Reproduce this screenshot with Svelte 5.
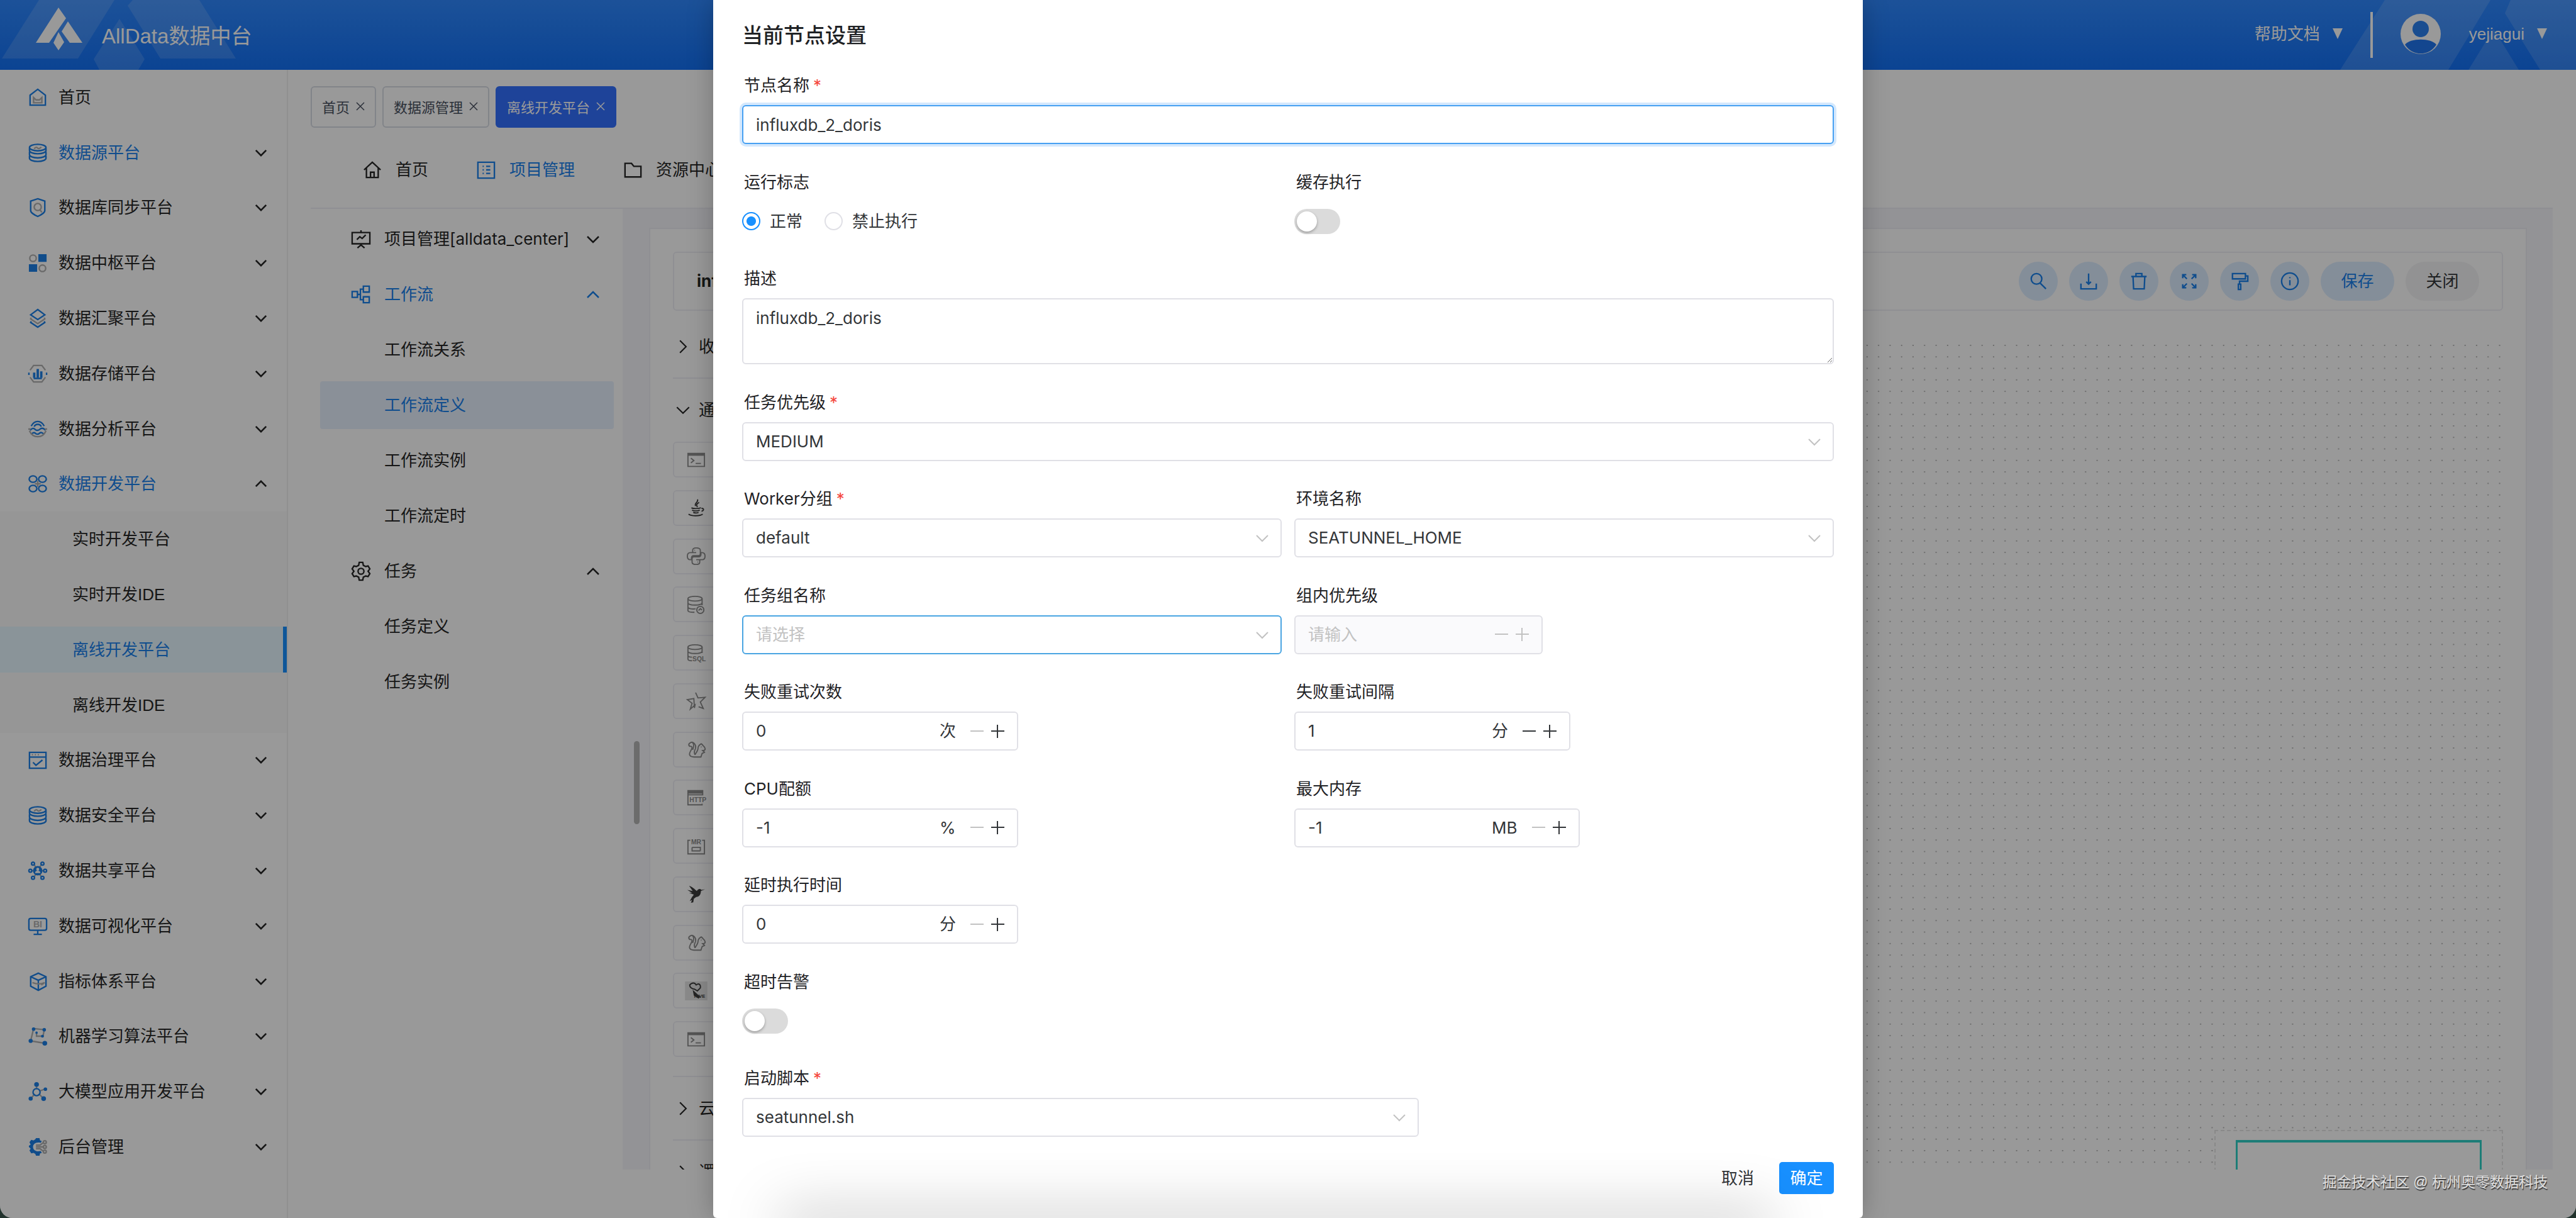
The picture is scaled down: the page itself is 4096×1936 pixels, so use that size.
<script lang="ts">
    // Two-tone icons of the platform menu, drawn on a 32 x 32 grid
    const icons: Record<string, string> = {
        home: '<path d="M3 12 16 2l13 10v17H3z"/><path class="soft" d="M9 16v9h14v-9l-4 4h-6z"/>',
        database:
            '<ellipse cx="16" cy="7" rx="14" ry="5.5"/><path d="M2 8v4c0 3 6 5.5 14 5.5S30 15 30 12V8M2 14v5c0 3 6 5.5 14 5.5S30 22 30 19v-5M2 21v4c0 3 6 5.5 14 5.5S30 28 30 25v-4"/><path class="soft" d="M10 9c3-4 5-2 6-1s4 1 6-2"/>',
        shield: '<path d="m16 1 12 4v16c0 4-6 7-12 10C10 28 4 25 4 21V5z"/><circle class="soft" cx="16" cy="15" r="6"/><path class="soft" d="m20 20 3 4"/>',
        blocks: '<path class="solid" d="M17 1h14v13H17zM1 18h14v13H1z"/><circle class="soft" cx="8" cy="8" r="5.5"/><circle class="soft" cx="24" cy="25" r="5.5"/>',
        layers: '<path d="m16 1 12 9-12 8-12-8z"/><path d="m5 21-1 2 12 8 12-8-1-2"/><path class="soft" d="m5 15-1 2 12 8 12-8-1-2"/>',
        storage: '<path class="soft" d="M3 10 9 2h14l6 8M3 22l6 8h14l6-8"/><path class="solid" d="M8 14h4v9H8zM14 8h4v15h-4zM20 12h4v11h-4z"/><path d="M1 14v4M31 14v4M9 24h14"/>',
        analysis:
            '<path d="M5 11C8 5 12 3 16 3s8 2 11 8M10 12c1-3 3-4 6-4s5 1 6 4M3 18c4-4 6-4 9-1 3 2 5 2 8-1 3-2 6-2 9 2M6 24c3-3 5-2 7 0 2 1 4 1 6-1 3-2 4-1 7 1"/><path class="soft" d="M0 16h4M28 16h4M2 19c3 7 8 10 14 10s11-3 14-10"/>',
        clover: '<ellipse cx="8" cy="8" rx="6.5" ry="5.5"/><ellipse cx="24" cy="8" rx="6.5" ry="5.5"/><ellipse cx="8" cy="24" rx="6.5" ry="5.5"/><ellipse cx="24" cy="24" rx="6.5" ry="5.5"/><path class="soft" d="M16 11v10M11 16h10"/>',
        govern: '<path d="M2 3h28v27H2zM2 11h28M8 20l5 5 11-9"/><path class="soft" d="M6 7h2M11 7h2M16 7h2"/>',
        share: '<path class="soft" d="m10 6 4 6M22 6l-4 6M5 16h5M22 16h5M10 26l4-6M22 26l-4-6"/><circle class="solid" cx="16" cy="16" r="8"/><circle class="hole" cx="16" cy="13.5" r="2.5"/><path class="hole" d="M11.500 20c0-3 2-4 4.500-4s4.500 1 4.500 4z"/><circle cx="8" cy="4" r="2.500"/><circle cx="24" cy="4" r="2.500"/><circle cx="3.500" cy="16" r="2.500"/><circle cx="28.500" cy="16" r="2.500"/><circle cx="8" cy="28" r="2.500"/><circle cx="24" cy="28" r="2.500"/>',
        bi: '<rect x="1" y="3" width="30" height="20" rx="3"/><path d="M16 23v6M9 30h14"/><text class="tag soft-text" x="16" y="18" text-anchor="middle" font-size="15">BI</text>',
        cube: '<path d="m17 2 13 6v16l-13 7-13-7V8zM4 8l13 6 13-6M17 14v17"/><path class="soft" d="M7 18c8 3 14 3 21 0M22 22l6-4"/>',
        learning:
            '<path class="soft" d="M9 3 4 24l24 4M9 3l18 2-2 11H14v-6"/><circle class="solid" cx="9" cy="4" r="3"/><circle class="solid" cx="27" cy="5" r="3"/><circle class="solid" cx="4" cy="24" r="3.500"/><circle class="solid" cx="28" cy="28" r="4"/><circle class="solid" cx="24" cy="16" r="2.500"/><circle class="solid" cx="14" cy="10" r="2"/>',
        model: '<path class="soft" d="M14 4v8M19 15l9-3M11 20l-6 7M18 20l7 7"/><circle cx="14" cy="17" r="6"/><circle class="solid" cx="14" cy="4" r="4"/><circle class="solid" cx="29" cy="12" r="3"/><circle class="solid" cx="4" cy="28" r="3.500"/><circle class="solid" cx="26" cy="28" r="4"/>',
        admin: '<path class="solid" d="m13 1 6 0 1 4 3 1-2 3c-8-2-13 2-13 7s5 9 13 7l2 3-3 1-1 4h-6l-1-3-3-2-4 1-3-5 2-3-3-3v-2l3-2-2-4 3-4 4 1 3-2z"/><path class="soft" d="M13 13h7l5-4M13 16h12M13 19h7l5 4"/><circle class="soft" cx="28" cy="8" r="2.500"/><circle class="soft" cx="28" cy="16" r="2.500"/><circle class="soft" cx="28" cy="24" r="2.500"/>',

        // Project navigation
        house: '<path d="M2 16 16 3l14 13M6 13v16h20V13M13 29v-9h6v9"/>',
        list: '<path d="M2 3h28v27H2zM10 10h2M16 10h7M10 16h2M16 16h7M10 22h2M16 22h7"/>',
        folder: '<path d="M3 5h11l4 5h12v18H3z"/>',
        board: '<path d="M1 5h30v19H1zM16 1v4M16 24v2M10 31l6-5 6 5M9 17l5-5 4 3 6-6"/>',
        flow: '<path d="M1 11h9v10H1zM20 2h10v10H20zM20 20h10v10H20zM10 16h5M20 7h-5v18h5"/>',
        gear: '<circle cx="16" cy="16" r="5"/><path d="M13 1h6l1 5 4 2 4-1 3 5-3 4 3 4-3 5-4-1-4 2-1 5h-6l-1-5-4-2-4 1-3-5 3-4-3-4 3-5 4 1 4-2z"/>',

        // Task types
        shell: '<path d="M2 5h28v22H2z"/><path class="solid" d="M2 5h28v4H2z"/><path d="m7 13 5 4-5 4M15 22h9"/>',
        java: '<path d="M18 2c3 4-6 6-3 11M21 7c-5 3-5 4-3 8M8 16c2 2 12 2 16 0M9 20c3 2 10 2 13 0M11 24c3 1 7 1 9 0M25 17c5 0 4 4 0 5M3 27c6 4 20 3 24 0"/>',
        python: '<path d="M16 10h-6V6c0-3 2-4 6-4s7 1 7 4v6c0 2-1 3-3 3h-8c-3 0-4 2-4 4v3H6c-3 0-5-2-5-6s2-6 5-6h10M16 22h6v4c0 3-2 4-6 4s-7-1-7-4v-6c0-2 1-3 3-3h8c3 0 4-2 4-4v-3h2c3 0 5 2 5 6s-2 6-5 6H16M13 6h1M18 26h1"/>',
        procedure:
            '<ellipse cx="14" cy="6" rx="12" ry="4"/><path d="M2 6v20c0 2 5 3 11 3M26 6v11M2 13c0 5 24 5 24 0M2 20c0 3 8 4 13 3"/><circle cx="23" cy="25" r="6"/><path d="m20 26 3-3 3 2"/>',
        sql: '<ellipse cx="14" cy="6" rx="12" ry="4"/><path d="M2 6v20c0 2 3 3 7 3M26 6v10M2 13c0 5 24 5 24 0M2 20c0 2 3 3 7 3"/><text class="tag" x="21" y="30" text-anchor="middle" font-size="11">SQL</text>',
        spark: '<path d="m15 2 4 9 12-1-8 8 5 11-8-3M13 28l1-5-8 7 3-10-8-6 11-2z"/>',
        flink: '<path d="M14 25c-3-5 0-7 1-11 1-7-5-12-9-9-4 2-3 6 1 6 3 0 2 4 0 7-5 8-1 11 5 11h12l2-6 4-2-3-3c6 0 5-5 1-8-2-2-3-4-4-3-4 2-5 4-5 8 0 3-2 5-5 10M10 5c3 3 2 7 0 12M24 12h1"/>',
        http: '<path d="M27 12V4H2v24h24v-2M2 11h25"/><path class="solid" d="M2 4h25v5H2z"/><text class="tag" x="19" y="23" text-anchor="middle" font-size="11">HTTP</text>',
        mr: '<path d="M6 6H2v23h28V6h-4M9 18h14v6M9 18v6h14"/><text class="tag" x="16" y="13" text-anchor="middle" font-size="11">MR</text>',
        bird: '<path class="solid" d="M4 2c4 1 9 5 13 9 3-5 6-4 8-2l6-1-7 3c0 6-3 10-8 10l-4 3-1 6-4 1 2-5-4 2 4-7 3-4-8-3 5 0-8-5 9 2z"/>',
        hive: '<path class="shade" d="M-3 0h38v32H-3z"/><path d="M5 6c4-5 9-4 11 0 5-4 8 0 7 5l-5 5-5-3c-4 0-8-3-8-7z"/><path class="solid" d="m10 14 13 12-3 3-8-5z"/><text class="tag" x="22" y="28" text-anchor="middle" font-size="8">HIVE</text>',

        // Canvas toolbar
        search: '<circle cx="13" cy="12" r="9"/><path d="m19 19 10 10"/>',
        download: '<path d="M16 3v17M12 17l4 4 4-4M3 20v9h26v-9"/>',
        trash: '<path d="M3 8h26M11 8V3h10v5M6 8l1 21h18l1-21"/>',
        expand: '<path d="M5 11V5h6M5 5l7 7M21 5h6v6M27 5l-7 7M5 21v6h6M5 27l7-7M27 21v6h-6M27 27l-7-7"/>',
        paint: '<path d="M4 3h22v9H4zM26 7h4v9H16v5M14 21h4v9h-4z"/>',
        info: '<circle cx="16" cy="16" r="14"/><path d="M16 14v9M16 9v2"/>',
    };

    type MenuItem = { label: string; icon: string; blue?: boolean; leaf?: boolean; children?: string[] };

    const platforms: MenuItem[] = [
        { label: "首页", icon: "home", leaf: true },
        { label: "数据源平台", icon: "database", blue: true },
        { label: "数据库同步平台", icon: "shield" },
        { label: "数据中枢平台", icon: "blocks" },
        { label: "数据汇聚平台", icon: "layers" },
        { label: "数据存储平台", icon: "storage" },
        { label: "数据分析平台", icon: "analysis" },
        {
            label: "数据开发平台",
            icon: "clover",
            blue: true,
            children: ["实时开发平台", "实时开发IDE", "离线开发平台", "离线开发IDE"],
        },
        { label: "数据治理平台", icon: "govern" },
        { label: "数据安全平台", icon: "database" },
        { label: "数据共享平台", icon: "share" },
        { label: "数据可视化平台", icon: "bi" },
        { label: "指标体系平台", icon: "cube" },
        { label: "机器学习算法平台", icon: "learning" },
        { label: "大模型应用开发平台", icon: "model" },
        { label: "后台管理", icon: "admin" },
    ];

    const tabs = ["首页", "数据源管理", "离线开发平台"];

    const navs = [
        { label: "首页", icon: "house" },
        { label: "项目管理", icon: "list" },
        { label: "资源中心", icon: "folder" },
    ];

    const projectMenu = [
        { label: "项目管理[alldata_center]", icon: "board", arrow: "down" },
        { label: "工作流", icon: "flow", arrow: "up", blue: true },
        { label: "工作流关系" },
        { label: "工作流定义", active: true },
        { label: "工作流实例" },
        { label: "工作流定时" },
        { label: "任务", icon: "gear", arrow: "up" },
        { label: "任务定义" },
        { label: "任务实例" },
    ];

    const taskTypes = [
        "shell", "java", "python", "procedure", "sql", "spark", "flink",
        "http", "mr", "bird", "flink", "hive", "shell",
    ];

    const tools = ["search", "download", "trash", "expand", "paint", "info"];

    let activeTab = $state("离线开发平台");
    let activeChild = $state("离线开发平台");
    let activeNav = $state("项目管理");

    let name = $state("influxdb_2_doris");
    let description = $state("influxdb_2_doris");
    let flag = $state("YES");
    let cache = $state(false);
    let timeoutAlert = $state(false);

    let numbers = $state({ retryTimes: 0, retryInterval: 1, cpu: -1, memory: -1, delay: 0 });
    const minimums = { retryTimes: 0, retryInterval: 0, cpu: -1, memory: -1, delay: 0 };

    type NumberKey = keyof typeof minimums;

    function step(key: NumberKey, by: number) {
        numbers[key] = Math.max(minimums[key], numbers[key] + by);
    }
</script>

{#snippet icon(kind: string)}
    <svg class="icon" viewBox="0 0 32 32" aria-hidden="true">{@html icons[kind]}</svg>
{/snippet}

{#snippet chevron(dir: string)}
    <svg class="chevron {dir}" viewBox="0 0 22 13" aria-hidden="true"><path d="m2 2 9 9 9-9" /></svg>
{/snippet}

{#snippet selectField(id: string, label: string, options: string[], required = false, extra = "")}
    <div class="field {extra}">
        <label for={id}>{label}{#if required}<span class="star">*</span>{/if}</label>
        <div class="select">
            <select {id}>
                {#each options as option}
                    <option>{option}</option>
                {/each}
            </select>
            {@render chevron("down")}
        </div>
    </div>
{/snippet}

{#snippet numberField(key: NumberKey, label: string, unit: string)}
    <div class="field">
        <label for={key}>{label}</label>
        <div class="number">
            <input id={key} type="text" inputmode="numeric" bind:value={numbers[key]} />
            <span class="unit">{unit}</span>
            <button type="button" aria-label="减少" disabled={numbers[key] <= minimums[key]} onclick={() => step(key, -1)}>
                <svg viewBox="0 0 21 21"><path d="M0 10h21" /></svg>
            </button>
            <button type="button" aria-label="增加" onclick={() => step(key, 1)}>
                <svg viewBox="0 0 21 21"><path d="M0 10h21M10 0v21" /></svg>
            </button>
        </div>
    </div>
{/snippet}

<div class="window">
    <header>
        <svg class="pattern" viewBox="0 0 375 111" aria-hidden="true">
            <path d="M62 0h120l-58 93H3zM211 0h106l58 93H255L203 9zM190 30l40 64-10 17h-62l-9-17z" />
        </svg>
        <svg class="pattern right" viewBox="0 0 375 111" aria-hidden="true">
            <path d="M71 0h168l-67 111H0zM271 0h104v111h-57L262 21zM244 46l40 65h-80z" />
        </svg>
        <svg class="logo" viewBox="0 0 74 68" aria-hidden="true">
            <path d="m36 0 12 17-27 39H0zM51 22l23 34H54L41 38zM36 39l9 16-9 13-8-12z" />
        </svg>
        <span class="brand">AllData数据中台</span>
        <button class="menu-button">帮助文档 <i class="caret"></i></button>
        <span class="bar"></span>
        <svg class="avatar" viewBox="0 0 64 64" aria-hidden="true">
            <circle cx="32" cy="32" r="32" fill="#fff" />
            <circle cx="32" cy="24" r="13" fill="#2b80f0" />
            <path d="M7 49c8-11 42-11 50 0-12 19-38 19-50 0z" fill="#2176ef" />
        </svg>
        <button class="menu-button user">yejiagui <i class="caret"></i></button>
    </header>

    <div class="body">
        <aside>
            <ul class="platforms">
                {#each platforms as item}
                    <li>
                        <a href="#top" class:blue={item.blue}>
                            <span class="duo">{@render icon(item.icon)}</span>
                            {item.label}
                            {#if !item.leaf}{@render chevron(item.children ? "up" : "down")}{/if}
                        </a>
                    </li>
                    {#if item.children}
                        <li class="group">
                            {#each item.children as child}
                                <div class="slot">
                                    <a href="#top" class:active={child === activeChild} onclick={() => (activeChild = child)}>{child}</a>
                                </div>
                            {/each}
                        </li>
                    {/if}
                {/each}
            </ul>
        </aside>

        <div class="content">
            <div class="tabs">
                {#each tabs as tab}
                    <button class:active={tab === activeTab} onclick={() => (activeTab = tab)}>
                        {tab}
                        <svg viewBox="0 0 14 14" aria-hidden="true"><path d="m1 1 12 12M13 1 1 13" /></svg>
                    </button>
                {/each}
            </div>

            <nav>
                {#each navs as nav}
                    <a href="#top" class:blue={nav.label === activeNav} onclick={() => (activeNav = nav.label)}>
                        {@render icon(nav.icon)}{nav.label}
                    </a>
                {/each}
            </nav>

            <div class="workspace">
                <ul class="project-menu">
                    {#each projectMenu as item}
                        <li>
                            <a href="#top" class:blue={item.blue || item.active} class:active={item.active} class:leaf={!item.icon}>
                                {#if item.icon}{@render icon(item.icon)}{/if}
                                {item.label}
                                {#if item.arrow}{@render chevron(item.arrow)}{/if}
                            </a>
                        </li>
                    {/each}
                </ul>

                <main>
                    <span class="scrollbar"></span>
                    <section class="card">
                        <div class="toolbar">
                            <h3>influxdb_2_doris</h3>
                            {#each tools as tool}
                                <button class="round" aria-label={tool}>{@render icon(tool)}</button>
                            {/each}
                            <button class="pill">保存</button>
                            <button class="pill plain">关闭</button>
                        </div>
                        <div class="dag">
                            <div class="palette">
                                <div class="fold">{@render chevron("next")}收藏</div>
                                <div class="fold">{@render chevron("down")}通用</div>
                                <ul>
                                    {#each taskTypes as type}
                                        <li class={type}>{@render icon(type)}</li>
                                    {/each}
                                </ul>
                                <div class="fold">{@render chevron("next")}云</div>
                                <div class="fold">{@render chevron("next")}逻辑</div>
                            </div>
                            <div class="canvas">
                                <svg class="dots" aria-hidden="true">
                                    <defs>
                                        <pattern id="dots" width="20" height="20" patternUnits="userSpaceOnUse" patternTransform="scale(0.9143)">
                                            <rect x="2" y="0" width="2" height="2" fill="#aaa" />
                                        </pattern>
                                    </defs>
                                    <rect width="100%" height="100%" fill="url(#dots)" />
                                </svg>
                                <div class="minimap"><span></span></div>
                            </div>
                        </div>
                    </section>
                </main>
            </div>
        </div>
    </div>

    <div class="mask">
        <form class="modal" onsubmit={(e) => e.preventDefault()}>
            <h2>当前节点设置</h2>

            <div class="fields">
                <div class="field">
                    <label for="name">节点名称<span class="star">*</span></label>
                    <input id="name" class="text focused" bind:value={name} />
                </div>

                <div class="pair">
                    <div class="field">
                        <div class="label" id="flag-label">运行标志</div>
                        <div class="line" role="radiogroup" aria-labelledby="flag-label">
                            <label class="radio"><input type="radio" value="YES" bind:group={flag} />正常</label>
                            <label class="radio"><input type="radio" value="NO" bind:group={flag} />禁止执行</label>
                        </div>
                    </div>
                    <div class="field">
                        <label for="cache">缓存执行</label>
                        <div class="line"><input id="cache" class="switch" type="checkbox" bind:checked={cache} /></div>
                    </div>
                </div>

                <div class="field">
                    <label for="description">描述</label>
                    <textarea id="description" bind:value={description}></textarea>
                </div>

                {@render selectField("priority", "任务优先级", ["MEDIUM"], true)}

                <div class="pair">
                    {@render selectField("worker", "Worker分组", ["default"], true)}
                    {@render selectField("environment", "环境名称", ["SEATUNNEL_HOME"])}
                </div>

                <div class="pair">
                    {@render selectField("group", "任务组名称", ["请选择"], false, "empty")}
                    <div class="field">
                        <label for="group-priority">组内优先级</label>
                        <div class="number disabled">
                            <input id="group-priority" type="text" placeholder="请输入" disabled />
                            <button type="button" aria-label="减少" disabled>
                                <svg viewBox="0 0 21 21"><path d="M0 10h21" /></svg>
                            </button>
                            <button type="button" aria-label="增加" disabled>
                                <svg viewBox="0 0 21 21"><path d="M0 10h21M10 0v21" /></svg>
                            </button>
                        </div>
                    </div>
                </div>

                <div class="pair">
                    {@render numberField("retryTimes", "失败重试次数", "次")}
                    {@render numberField("retryInterval", "失败重试间隔", "分")}
                </div>

                <div class="pair">
                    {@render numberField("cpu", "CPU配额", "%")}
                    {@render numberField("memory", "最大内存", "MB")}
                </div>

                <div class="pair">
                    {@render numberField("delay", "延时执行时间", "分")}
                </div>

                <div class="field">
                    <label for="timeout">超时告警</label>
                    <div class="line"><input id="timeout" class="switch" type="checkbox" bind:checked={timeoutAlert} /></div>
                </div>

                {@render selectField("script", "启动脚本", ["seatunnel.sh"], true, "partial")}
            </div>

            <footer>
                <button type="button" class="cancel">取消</button>
                <button type="submit" class="confirm">确定</button>
            </footer>
        </form>
        <span class="dock-shadow"></span>
        <span class="watermark">掘金技术社区 @ 杭州奥零数据科技</span>
    </div>
</div>

<style>
    :global(body) {
        background: #22332d;
    }

    .window,
    .window :global(*) {
        box-sizing: border-box;
    }

    .window {
        position: relative;
        display: flex;
        flex-direction: column;
        height: 100vh;
        overflow: hidden;
        border-radius: 0 0 20px 20px;
        background: #fff;
        color: #262626;
        font-family: "Liberation Sans", "Noto Sans CJK SC", sans-serif;
        font-size: 26px;
        line-height: 32px;
    }

    a {
        color: inherit;
        text-decoration: none;
    }

    button {
        padding: 0;
        border: 0;
        background: none;
        color: inherit;
        font: inherit;
    }

    ul {
        margin: 0;
        padding: 0;
        list-style: none;
    }

    .blue {
        color: #1a80ec;
    }

    .icon {
        flex: none;
        width: 30px;
        height: 30px;
        overflow: visible;
        fill: none;
        stroke: currentColor;
        stroke-width: 2.5;
    }

    .icon :global(.solid) {
        fill: currentColor;
        stroke: none;
    }

    .icon :global(.hole) {
        fill: #fff;
        stroke: none;
    }

    .icon :global(.soft) {
        stroke: #b0b0b0;
    }

    .icon :global(.shade) {
        fill: #e4e4e4;
        stroke: none;
    }

    .icon :global(.tag) {
        fill: currentColor;
        stroke: none;
        font-weight: bold;
    }

    .icon :global(.soft-text) {
        fill: #b0b0b0;
    }

    .chevron {
        flex: none;
        width: 22px;
        height: 13px;
        fill: none;
        stroke: currentColor;
        stroke-width: 2;
    }

    .chevron.up {
        transform: rotate(180deg);
    }

    .chevron.next {
        transform: rotate(-90deg);
    }

    /* Header */

    header {
        position: relative;
        display: flex;
        flex: none;
        align-items: center;
        height: 111px;
        padding: 0 46px 0 57px;
        background: linear-gradient(#2f88ff, #1371f5);
        color: #fff;
    }

    .pattern {
        position: absolute;
        top: 0;
        left: 0;
        height: 111px;
        fill: rgba(255, 255, 255, 0.14);
    }

    .pattern.right {
        right: 0;
        left: auto;
    }

    .logo {
        position: relative;
        width: 74px;
        height: 68px;
        margin-bottom: 20px;
        fill: #fff;
    }

    .brand {
        position: relative;
        flex: 1;
        margin-left: 31px;
        padding-top: 4px;
        font-size: 33px;
        line-height: 40px;
    }

    .menu-button {
        position: relative;
        display: flex;
        gap: 20px;
        align-items: center;
        padding-bottom: 4px;
    }

    .caret {
        border: solid transparent;
        border-width: 17px 8px 0;
        border-top-color: #fff;
    }

    .bar {
        position: relative;
        width: 4px;
        height: 73px;
        margin: 0 44px;
        background: #fff;
    }

    .avatar {
        position: relative;
        width: 64px;
        height: 64px;
        margin: 0 45px 4px 0;
    }

    .body {
        display: flex;
        flex: 1;
        min-height: 0;
    }

    /* Platform menu */

    aside {
        flex: none;
        width: 458px;
        padding-bottom: 69px;
        border-right: 2px solid #f0f0f0;
    }

    .platforms {
        display: flex;
        flex-direction: column;
        height: 100%;
    }

    .platforms li {
        display: flex;
        flex: 1 1 0;
        flex-direction: column;
        justify-content: center;
    }

    .platforms .group {
        flex-grow: 4;
        background: #fafafa;
    }

    .platforms a {
        display: flex;
        align-items: center;
        height: 73px;
        padding: 0 31px 0 45px;
    }

    .duo {
        display: flex;
        margin-right: 18px;
        color: #1c7fe6;
    }

    .platforms .chevron {
        width: 20px;
        height: 12px;
        margin-left: auto;
        color: #262626;
        stroke-width: 3;
    }

    .slot {
        display: flex;
        flex: 1;
        flex-direction: column;
        justify-content: center;
    }

    .slot a {
        padding-left: 115px;
    }

    .slot .active {
        border-right: 6px solid #1890ff;
        background: #e6f7ff;
        color: #1a80ec;
    }

    /* Tabs and navigation */

    .content {
        display: flex;
        flex: 1;
        flex-direction: column;
        min-width: 0;
        padding: 26px 37px 77px 36px;
    }

    .tabs {
        display: flex;
        gap: 10px;
    }

    .tabs button {
        display: flex;
        gap: 10px;
        align-items: center;
        height: 66px;
        padding: 4px 16px 0;
        border: 2px solid #d8dce5;
        border-radius: 6px;
        color: #495060;
        font-size: 22px;
    }

    .tabs svg {
        width: 14px;
        height: 14px;
        margin-bottom: 6px;
        stroke: currentColor;
        stroke-width: 1.5;
    }

    .tabs .active {
        border-color: #3370ff;
        background: #3370ff;
        color: #fff;
    }

    nav {
        display: flex;
        flex: none;
        gap: 76px;
        align-items: center;
        height: 129px;
        padding: 6px 0 0 82px;
        border-bottom: 2px solid #efeff5;
    }

    nav a {
        display: flex;
        gap: 21px;
        align-items: center;
    }

    nav .icon {
        width: 32px;
    }

    /* Workspace */

    .workspace {
        display: flex;
        flex: 1;
        min-height: 0;
    }

    .project-menu {
        display: flex;
        flex: none;
        flex-direction: column;
        gap: 12px;
        width: 496px;
        padding: 10px 14px 0 15px;
    }

    .project-menu a {
        display: flex;
        align-items: center;
        height: 76px;
        padding: 0 22px 0 50px;
        border-radius: 4px;
    }

    .project-menu .leaf {
        padding-left: 102px;
    }

    .project-menu .icon {
        margin-right: 22px;
    }

    .project-menu a,
    .toolbar h3 {
        font-family: Inter, "Noto Sans CJK SC", sans-serif;
    }

    .project-menu .chevron {
        margin-left: auto;
        stroke-width: 2.5;
    }

    .project-menu .active {
        background: #e7f1fd;
    }

    main {
        position: relative;
        display: flex;
        flex: 1;
        min-width: 0;
        padding: 30px 41px 0 42px;
        background: #f5f6fa;
        overflow: hidden;
    }

    .scrollbar {
        position: absolute;
        top: 846px;
        left: 18px;
        width: 9px;
        height: 132px;
        border-radius: 5px;
        background: #b4b4b4;
    }

    .card {
        flex: 1;
        min-width: 0;
        padding: 36px 36px 0;
        border: 2px solid #efeff5;
        border-bottom: 0;
        background: #fff;
    }

    .toolbar {
        display: flex;
        gap: 18px;
        align-items: center;
        height: 94px;
        padding: 0 36px;
        border: 2px solid #efeff5;
        border-radius: 6px;
    }

    .toolbar h3 {
        margin: 0 auto 0 0;
        font-size: 26px;
    }

    .round,
    .pill {
        display: flex;
        align-items: center;
        justify-content: center;
        width: 62px;
        height: 62px;
        border-radius: 31px;
        background: #dcedff;
        color: #1a80ec;
    }

    .round .icon {
        width: 30px;
        height: 30px;
    }

    .pill {
        width: 117px;
    }

    .plain {
        background: #f4f4f5;
        color: #333639;
    }

    .dag {
        display: flex;
    }

    .palette {
        flex: none;
        width: 360px;
        padding-top: 7px;
    }

    .fold {
        display: flex;
        gap: 13px;
        align-items: center;
        height: 100px;
        padding-left: 4px;
    }

    .fold .chevron {
        width: 24px;
        height: 14px;
    }

    .fold:not(:nth-child(2)) {
        height: 101px;
        border-bottom: 2px solid #efeff5;
    }

    .palette ul {
        display: grid;
        align-content: space-between;
        height: 1010px;
        padding-bottom: 30px;
        border-bottom: 2px solid #efeff5;
    }

    .palette li {
        display: flex;
        align-items: center;
        height: 57px;
        padding-left: 20px;
        border: 2px solid #efeff5;
        border-radius: 6px;
        color: #8c8c8c;
    }

    .palette li .icon {
        width: 30px;
        height: 30px;
        stroke-width: 2;
    }

    .palette .java,
    .palette .bird,
    .palette .hive {
        color: #3c3c3c;
    }

    .canvas {
        position: relative;
        flex: 1;
        height: 1364px;
        margin-top: 54px;
    }

    .dots {
        display: block;
        width: 100%;
        height: 1310px;
    }

    .minimap {
        position: absolute;
        right: 0;
        bottom: 0;
        width: 459px;
        height: 116px;
        padding: 14px 32px 0;
        border: 2px dashed #e4e4e4;
        border-bottom: 0;
        background: #fff;
    }

    .minimap span {
        display: block;
        height: 100%;
        border: solid #31d0c6;
        border-width: 4px 3px 0;
    }

    /* Node settings */

    .mask {
        position: absolute;
        inset: 0;
        display: flex;
        justify-content: center;
        background: rgba(0, 0, 0, 0.4);
    }

    .modal {
        display: flex;
        flex-direction: column;
        width: min(1828px, 100%);
        padding: 36px 46px 38px;
        border-radius: 0 0 6px 6px;
        background: #fff;
        box-shadow: 0 0 40px rgba(0, 0, 0, 0.25);
        color: #333639;
        font-family: Inter, "Noto Sans CJK SC", sans-serif;
    }

    h2 {
        margin: 0 0 44px;
        color: #1f2225;
        font-size: 33px;
        font-weight: 500;
        line-height: 40px;
    }

    .fields {
        display: flex;
        flex: 1;
        flex-direction: column;
        justify-content: space-between;
        margin-bottom: 40px;
    }

    .pair {
        display: grid;
        grid-template-columns: 1fr 1fr;
        gap: 20px;
    }

    .field > label,
    .label {
        display: block;
        padding: 0 0 15px 3px;
        color: #1f2225;
    }

    .star {
        margin-left: 6px;
        color: #f5463d;
    }

    .line {
        display: flex;
        align-items: center;
        height: 62px;
    }

    .text,
    select,
    textarea,
    .number {
        display: block;
        width: 100%;
        height: 62px;
        padding: 0 20px;
        border: 2px solid #e0e0e6;
        border-radius: 6px;
        outline: 0;
        background: #fff;
        color: inherit;
        font: inherit;
    }

    .focused {
        border-color: #46a0f2;
        box-shadow: 0 0 0 4px #d4e8fd;
    }

    textarea {
        height: 105px;
        padding: 14px 20px;
        resize: vertical;
    }

    .select {
        position: relative;
    }

    select {
        appearance: none;
    }

    .select .chevron {
        position: absolute;
        top: 25px;
        right: 20px;
        color: #c2c2c2;
    }

    .empty select {
        border-color: #4aa5e2;
        color: #c2c2c2;
    }

    .partial .select {
        width: 62%;
    }

    .number {
        display: inline-flex;
        align-items: center;
        width: auto;
        vertical-align: top;
    }

    .number input {
        width: 292px;
        padding: 0;
        border: 0;
        outline: 0;
        background: none;
        color: inherit;
        font: inherit;
    }

    .number input::placeholder {
        color: #c2c2c2;
    }

    .unit {
        margin-right: 18px;
    }

    .number button {
        display: flex;
        margin-left: 5px;
    }

    .number button + button {
        margin-left: 12px;
    }

    .number button:disabled {
        color: #c2c2c2;
    }

    .number svg {
        width: 21px;
        height: 21px;
        stroke: currentColor;
        stroke-width: 2;
    }

    .disabled {
        background: #fafafc;
    }

    .radio {
        display: flex;
        gap: 15px;
        align-items: center;
        margin-right: 35px;
    }

    .radio input {
        appearance: none;
        width: 29px;
        height: 29px;
        margin: 0;
        border: 2px solid #e0e0e6;
        border-radius: 50%;
    }

    .radio input:checked {
        border-color: #1890ff;
        background: radial-gradient(circle, #1890ff 7px, #fff 8px);
    }

    .switch {
        appearance: none;
        width: 73px;
        height: 40px;
        margin: 0;
        padding: 4px;
        border-radius: 20px;
        background: #dbdbdb;
    }

    .switch::before {
        display: block;
        width: 32px;
        height: 32px;
        border-radius: 50%;
        background: #fff;
        box-shadow: 0 2px 4px rgba(0, 0, 0, 0.3);
        content: "";
    }

    .switch:checked {
        padding-left: 37px;
        background: #1890ff;
    }

    footer {
        display: flex;
        gap: 40px;
        justify-content: flex-end;
    }

    .confirm {
        width: 87px;
        height: 51px;
        border-radius: 5px;
        background: #1890ff;
        color: #fff;
    }

    .dock-shadow {
        position: absolute;
        bottom: -20px;
        left: 50%;
        width: 1560px;
        height: 20px;
        margin-left: -800px;
        box-shadow: 0 0 90px 10px rgba(0, 0, 0, 0.26);
        pointer-events: none;
    }

    .watermark {
        position: absolute;
        right: 45px;
        bottom: 41px;
        color: #e0e0e0;
        font-size: 23px;
        text-shadow: 1px 2px 1px #333;
    }
</style>
